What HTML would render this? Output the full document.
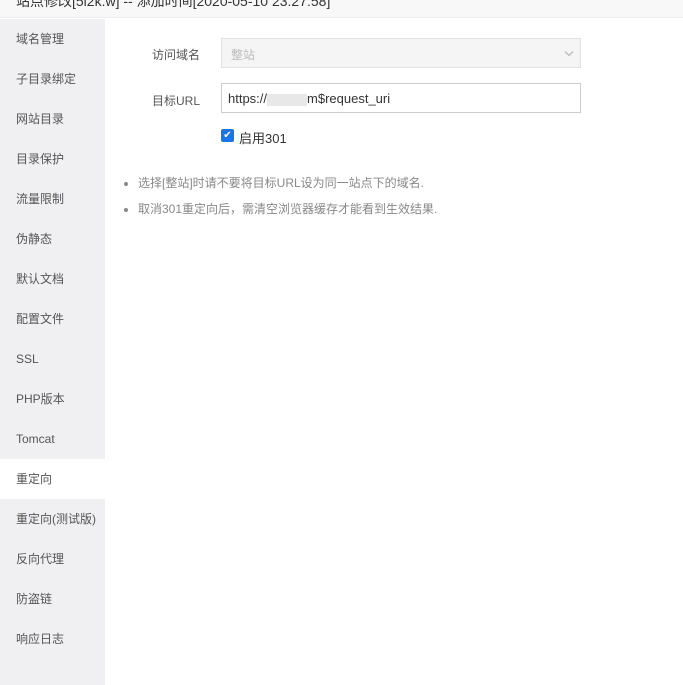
<!DOCTYPE html>
<html><head><meta charset="utf-8"><style>
body{margin:0;width:683px;height:684px;overflow:hidden;background:#fff;font-family:"Liberation Sans","Noto Sans CJK SC",sans-serif;font-size:12px;color:#555;position:relative}
.top{position:absolute;left:0;top:0;width:683px;height:17px;background:#f8f8f8;border-bottom:1px solid #eee;overflow:hidden}
.top span{position:absolute;left:16px;top:-9px;font-size:14px;color:#333}
.side{position:absolute;left:0;top:19px;width:105px;height:666px;background:#f0f0f2}
.side div{height:40px;line-height:40px;padding-left:16px;color:#555;font-size:12px}
.side div.on{background:#fff}
.lab{position:absolute;left:150px;width:50px;text-align:right;color:#555}
.box{position:absolute;left:221px;width:360px;height:28px;border:1px solid #ccc;box-sizing:border-box}
ul{position:absolute;left:118px;top:170px;margin:0;padding:0 0 0 20px;color:#888}
li{line-height:26px}
</style></head><body>
<div class="top"><span>站点修改[5i2k.w] -- 添加时间[2020-05-10 23:27:58]</span></div>
<div class="side">
<div>域名管理</div><div>子目录绑定</div><div>网站目录</div><div>目录保护</div><div>流量限制</div><div>伪静态</div><div>默认文档</div><div>配置文件</div><div>SSL</div><div>PHP版本</div><div>Tomcat</div><div class="on">重定向</div><div>重定向(测试版)</div><div>反向代理</div><div>防盗链</div><div>响应日志</div>
</div>
<div class="lab" style="top:46px">访问域名</div>
<div class="box" style="top:38px;background:#f5f5f5;border-color:#e2e2e2;height:30px"><span style="position:absolute;left:9px;top:7px;color:#bbb">整站</span><svg style="position:absolute;right:6px;top:11px" width="10" height="7" viewBox="0 0 10 7"><path d="M1 1.5L5 5.5L9 1.5" fill="none" stroke="#bbb" stroke-width="1.3"/></svg></div>
<div class="lab" style="top:92px">目标URL</div>
<div class="box" style="top:83px;height:30px"><span style="position:absolute;left:6px;top:7px;color:#333;font-size:13px">https://<span style="display:inline-block;width:40px;height:12px;background:#e8e8e8;vertical-align:middle"></span>m$request_uri</span></div>
<div style="position:absolute;left:221px;top:129px;width:13px;height:13px;background:#1a73e8;border-radius:2px;color:#fff;font-size:10px;line-height:13px;text-align:center">✔</div>
<div style="position:absolute;left:239px;top:128px;color:#333;font-size:13px">启用301</div>
<ul><li>选择[整站]时请不要将目标URL设为同一站点下的域名.</li><li>取消301重定向后，需清空浏览器缓存才能看到生效结果.</li></ul>
</body></html>
